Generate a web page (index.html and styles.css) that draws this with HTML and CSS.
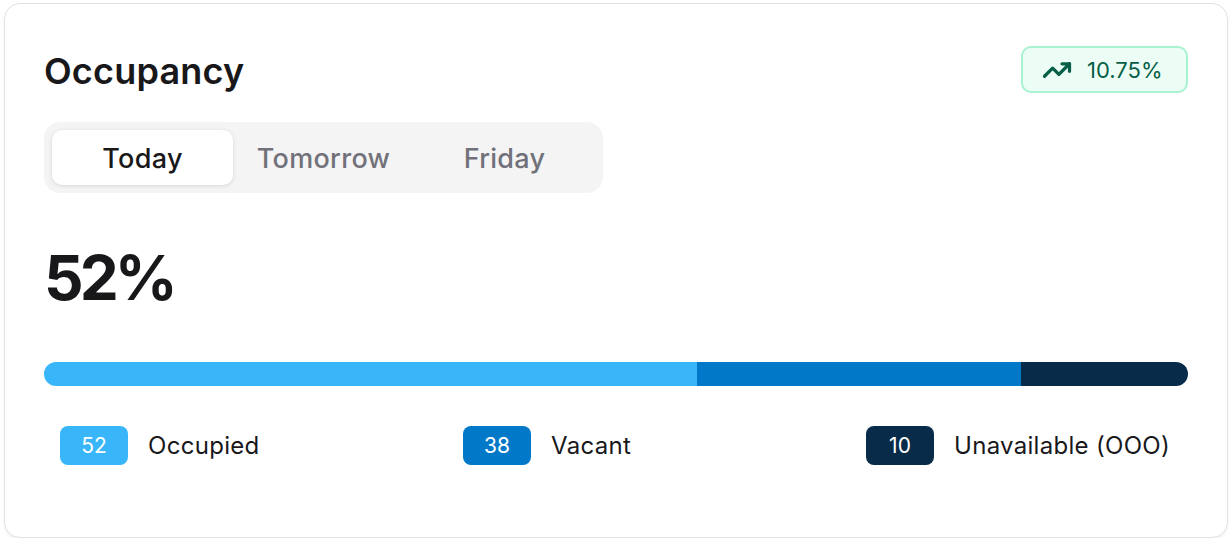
FILE: index.html
```html
<!DOCTYPE html>
<html>
<head>
<meta charset="utf-8">
<link rel="stylesheet" href="styles.css">
</head>
<body>
<div class="card">
  <div class="header">
    <h1 class="title">Occupancy</h1>
    <div class="trend">
      <svg class="trend-icon" viewBox="0 0 24 24" width="30" height="30" fill="none" stroke="currentColor" stroke-width="2.6" stroke-linecap="round" stroke-linejoin="round">
        <polyline points="22 7 13.5 15.5 8.5 10.5 2 17"></polyline>
        <polyline points="16 7 22 7 22 13"></polyline>
      </svg>
      <span>10.75%</span>
    </div>
  </div>
  <div class="tabs">
    <div class="tab active">Today</div>
    <div class="tab">Tomorrow</div>
    <div class="tab">Friday</div>
  </div>
  <div class="value">52%</div>
  <div class="bar">
    <div class="seg seg-occ" style="width:57.04%"></div>
    <div class="seg seg-vac" style="width:28.35%"></div>
    <div class="seg seg-ooo" style="width:14.61%"></div>
  </div>
  <div class="legend">
    <div class="item"><span class="chip chip-occ">52</span><span class="label">Occupied</span></div>
    <div class="item"><span class="chip chip-vac">38</span><span class="label">Vacant</span></div>
    <div class="item"><span class="chip chip-ooo">10</span><span class="label">Unavailable (OOO)</span></div>
  </div>
</div>
</body>
</html>
```

FILE: styles.css
```css
* { box-sizing: border-box; }
html, body { margin: 0; padding: 0; background: #ffffff; }
body {
  font-family: "Inter", "Lato", "Noto Sans", sans-serif;
  color: #18181b;
}
.card {
  margin: 3px 0 0 4px;
  width: 1224px;
  height: 535px;
  border: 1.5px solid #e2e2e2;
  border-radius: 16px;
  box-shadow: 0 2px 3px rgba(0,0,0,0.05);
  padding: 42px 39px 0 39px;
  background: #fff;
}
.header {
  display: flex;
  justify-content: space-between;
  align-items: flex-start;
  height: 76px;
}
.title {
  margin: 3px 0 0 0;
  font-size: 36px;
  font-weight: 600;
  letter-spacing: 0.2px;
  line-height: 44px;
  color: #18181b;
}
.trend {
  display: flex;
  align-items: center;
  gap: 15px;
  height: 47px;
  width: 167px;
  padding: 0 19px;
  background: #ecfdf5;
  border: 2px solid #a7f3d0;
  border-radius: 10px;
  color: #065f46;
  font-size: 22px;
  font-weight: 400;
}
.trend-icon { flex: none; }
.tabs {
  display: flex;
  width: 559px;
  height: 71px;
  padding: 8px;
  background: #f4f4f5;
  border-radius: 16px;
}
.tab {
  width: 181px;
  height: 55px;
  display: flex;
  align-items: center;
  justify-content: center;
  padding-top: 2px;
  font-size: 27px;
  letter-spacing: 0.3px;
  font-weight: 500;
  color: #71717a;
  border-radius: 10px;
}
.tab.active {
  background: #fff;
  color: #18181b;
  box-shadow: 0 1px 4px rgba(0,0,0,0.12);
}
.value {
  margin-top: 50px;
  font-size: 62px;
  font-weight: 700;
  line-height: 70px;
  letter-spacing: -4px;
  color: #18181b;
}
.bar {
  margin-top: 49px;
  display: flex;
  height: 24px;
  border-radius: 12px;
  overflow: hidden;
}
.seg { height: 100%; }
.seg-occ, .chip-occ { background: #38b6f9; }
.seg-vac, .chip-vac { background: #0279c8; }
.seg-ooo, .chip-ooo { background: #082b4a; }
.legend {
  margin-top: 40px;
  display: grid;
  grid-template-columns: 403px 403px 1fr;
  padding-left: 16px;
}
.item {
  display: flex;
  align-items: center;
  gap: 20px;
}
.chip {
  width: 68px;
  height: 39px;
  border-radius: 8px;
  color: #fff;
  display: flex;
  align-items: center;
  justify-content: center;
  font-size: 21px;
  font-weight: 400;
}
.label {
  font-size: 24px;
  letter-spacing: 0.3px;
  font-weight: 400;
  color: #18181b;
}
```
